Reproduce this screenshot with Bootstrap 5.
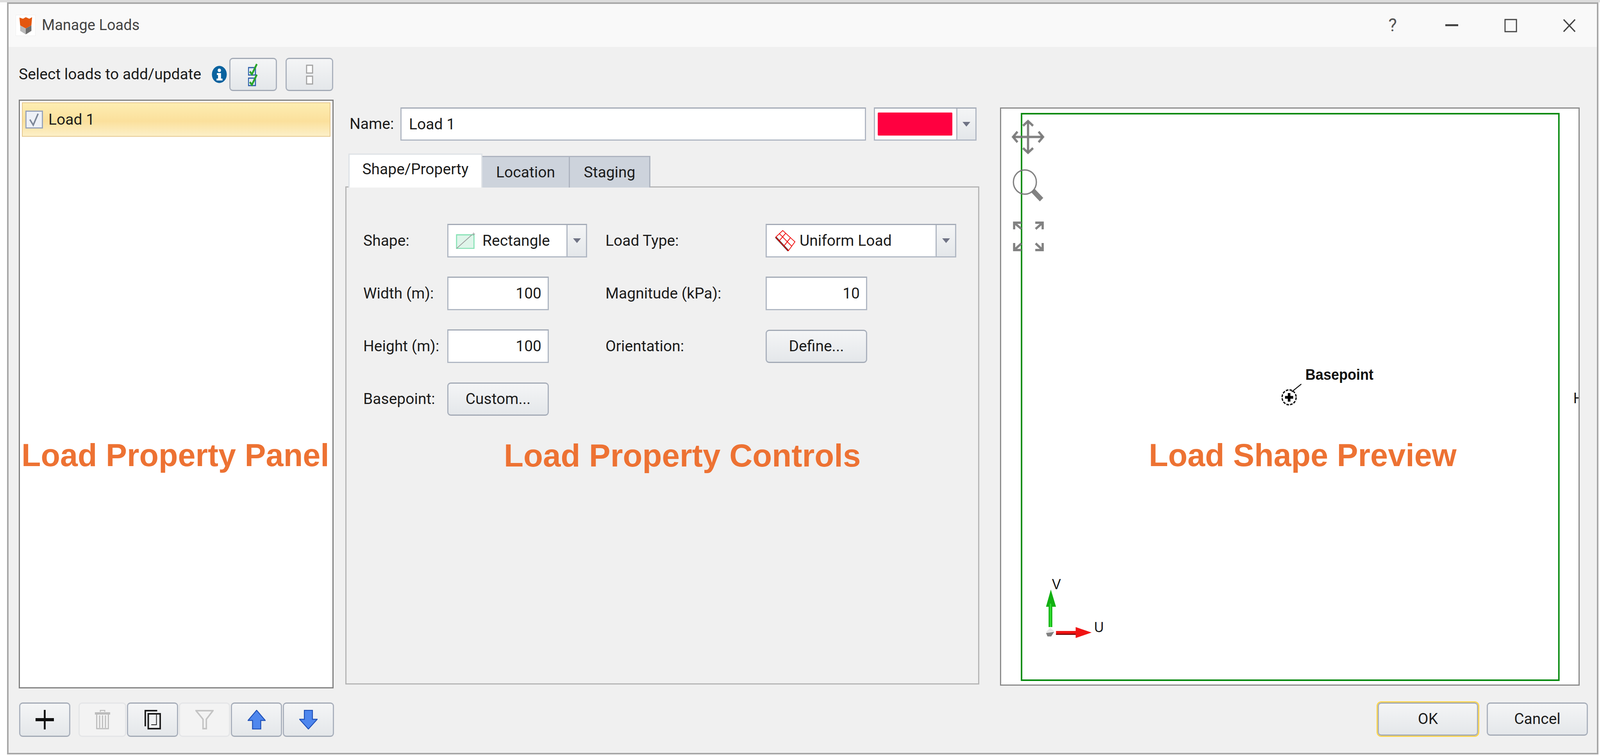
<!DOCTYPE html>
<html lang="en">
<head>
  <meta charset="UTF-8">
  <title>Manage Loads</title>
  <link rel="stylesheet" href="https://cdn.jsdelivr.net/npm/bootstrap@5.3.2/dist/css/bootstrap.min.css">
  <style>
    html, body { height: 1935px; overflow: hidden; }
    body { position: relative; background: #fff; color: #1c1c1c; font-family: Roboto, "Liberation Sans", sans-serif; font-size: 39px; line-height: 1.2; }
    .top-band { height: 6px; background: #dcdcdc; }
    .dlg { margin-left: 18px; width: 4074px; height: 1925px; border: 4px solid #a8a8a8; background: #f0f0f0; }
    .titlebar { height: 110px; background: #f9f9f9; padding-left: 18px; padding-right: 54px; color: #444; font-size: 38px; }
    .title-icon { width: 51px; height: 54px; background: #fff; border: 1px solid #eee; margin-right: 16px; }
    .help { font-size: 46px; margin-right: 124px; color: #555; }
    .win-min { margin-right: 118px; }
    .win-max { margin-right: 117px; }

    .main { height: 1642px; padding: 28px 44px 0 26px; }
    .col-left { width: 806px; }
    .col-mid { width: 1623px; margin-left: 30px; padding: 127px 0 10px; }
    .col-right { width: 1484px; margin-left: 53px; padding: 127px 0 7px; }
    .head-row { height: 85px; margin-bottom: 22px; }
    .head-row .lbl { width: 494px; white-space: nowrap; }
    .info { width: 39px; height: 45px; margin-right: 6px; }

    .w-btn { border: 3px solid #aab1bd; border-top-color: #a2a9b5; border-bottom-color: #a2a9b5; border-radius: 9px; color: #1c1c1c; font-size: 39px; line-height: 1; padding: 0;
      background: linear-gradient(#f4f5f6, #e4e7ea); }
    .w-btn:disabled { opacity: 1; border-color: #e4e5e7; background: #f3f3f3; }
    .w-btn.head { width: 122px; height: 85px; margin-right: 22px; }
    .w-btn.head:last-child { margin-right: 0; }

    .load-list { border: 3px solid #7f7f7f; background: #fff; padding: 4px 5px; border-radius: 0; flex: 1 1 auto; }
    .load-item { height: 88px; border: 2px solid #e6c88f; border-radius: 8px; padding: 0 0 0 7px; gap: 14px;
      background: linear-gradient(#fdedb2, #fbe09c 55%, #fcf0c8); color: #1c1c1c; }
    .load-check { width: 45px; height: 46px; }

    .name-row { height: 85px; margin-bottom: 33px; padding-left: 11px; padding-right: 7px; }
    .name-lbl { width: 130px; }
    .w-input { border: 3px solid #b0b7c3; border-top-color: #a2a9b5; border-radius: 0; background: #fff; font-size: 39px; line-height: 1; color: #1c1c1c; }
    .name-input { padding: 0 19px; flex: 1 1 auto; width: auto; }
    .color-combo { width: 263px; height: 85px; margin-left: 20px; padding-left: 7px; }
    .swatch { height: 59px; width: 193px; background: #ff0040; border-radius: 2px; margin-right: 10px; }

    .w-combo { border: 3px solid #b0b7c3; border-top-color: #a2a9b5; background: #fff; }
    .w-combo .arrow { width: 50px; border-left: 3px solid #b0b7c3; background: linear-gradient(#f4f5f6, #e4e7ea); }
    .tri { width: 0; height: 0; border-left: 10px solid transparent; border-right: 10px solid transparent; border-top: 12px solid #6f7385; }

    .tabs { height: 87px; margin: 0 0 -3px 8px; padding: 0; border: 0; position: relative; z-index: 1; }
    .tabs .nav-link { height: 81px; border: 3px solid #adb3bf; border-bottom: 0; border-left-width: 0; border-radius: 0; background: #cdd3dc; color: #1c1c1c; padding: 16px 0 0 0; text-align: center; margin: 0; }
    .tabs .nav-link.active { height: 87px; border-left-width: 3px; background: #fff; padding-top: 14px; width: 343px; color: #1c1c1c; }
    .tabs .t2 { width: 224px; }
    .tabs .t3 { width: 206px; border-right-width: 3px; }
    .pane { flex: 1 1 auto; border: 3px solid #b5b5b5; border-radius: 0; background: #f0f0f0; padding: 93px 0 0 43px; }

    .f-row { height: 86px; margin-bottom: 49px; }
    .f-lbl { width: 215px; }
    .f-cell { width: 358px; }
    .f-lbl2 { width: 410px; margin-left: 47px; }
    .f-combo { height: 86px; width: 358px; padding-left: 19px; }
    .f-combo2 { width: 488px; }
    .f-input { width: 260px; height: 86px; text-align: right; padding: 0 16px; }
    .f-btn { width: 260px; height: 85px; }
    .combo-text { flex: 1 1 auto; margin-left: 18px; }
    .f-combo2 .combo-text { margin-left: 10px; }

    .preview { flex: 1 1 auto; border: 3px solid #8a8a8a; background: #fff; overflow: hidden; }
    .preview svg { display: block; }

    .foot { height: 165px; padding: 36px 23px 0 27px; }
    .tool { width: 131px; height: 88px; margin-right: 2px; }
    .tool.first { margin-right: 21px; }
    .tool.narrow { width: 122px; }
    .w-btn.act { width: 259px; height: 85px; }
    .w-btn.ok { width: 257px; margin-right: 22px; box-shadow: 0 0 0 3px #fbd54e; }

    .caption { position: absolute; color: #ed7233; font-family: "Liberation Sans", Arial, sans-serif; font-weight: 700; font-size: 81px; line-height: 1; white-space: nowrap; }
    .cap-panel { left: 55px; top: 1125px; }
    .cap-controls { left: 1290px; top: 1125px; font-size: 81.8px; }
    .cap-preview { left: 2941px; top: 1125px; }
  </style>
</head>
<body>
<div class="top-band"></div>
<div class="dlg d-flex flex-column">

  <div class="titlebar d-flex align-items-center">
    <div class="title-icon d-flex align-items-center justify-content-center">
      <svg width="36" height="48" viewBox="0 0 40 48" preserveAspectRatio="none">
        <path d="M2 4 L12 7 L20 3 L30 7 L38 3 L36 24 L20 32 L4 24 Z" fill="#e4570f"/>
        <path d="M20 32 L36 24 V38 L20 47 Z" fill="#6d6d6d"/>
        <path d="M4 24 L20 32 V47 L4 38 Z" fill="#b9b9b9"/>
      </svg>
    </div>
    <span class="flex-grow-1">Manage Loads</span>
    <span class="help">?</span>
    <svg class="win-min" width="33" height="6" viewBox="0 0 36 6" preserveAspectRatio="none"><rect width="36" height="5" fill="#444"/></svg>
    <svg class="win-max" width="33" height="35" viewBox="0 0 35 35" preserveAspectRatio="none"><rect x="2" y="2" width="31" height="31" fill="none" stroke="#444" stroke-width="3"/></svg>
    <svg width="33" height="35" viewBox="0 0 36 35" preserveAspectRatio="none"><path d="M2 2 L34 33 M34 2 L2 33" stroke="#444" stroke-width="3.5"/></svg>
  </div>

  <div class="main d-flex">
    <!-- left column: load list -->
    <div class="col-left d-flex flex-column">
      <div class="head-row d-flex align-items-center">
        <span class="lbl">Select loads to add/update</span>
        <svg class="info" viewBox="0 0 41 45" preserveAspectRatio="none">
          <ellipse cx="20.5" cy="22.5" rx="20" ry="22" fill="#0b639f"/>
          <circle cx="20.5" cy="12" r="4.5" fill="#fff"/>
          <path d="M14 19 H25 V33 H29 V38 H13 V33 H17 V24 H14 Z" fill="#fff"/>
        </svg>
        <button class="btn w-btn head d-flex align-items-center justify-content-center">
          <svg width="27" height="60" viewBox="0 0 30 60" preserveAspectRatio="none">
            <rect x="1" y="12" width="20" height="19" fill="#e8eef8" stroke="#2a5da8" stroke-width="3"/>
            <rect x="1" y="39" width="20" height="19" fill="#e8eef8" stroke="#2a5da8" stroke-width="3"/>
            <path d="M5 22 L11 29 L25 3" fill="none" stroke="#2aa52a" stroke-width="5"/>
            <path d="M5 49 L11 56 L25 30" fill="none" stroke="#2aa52a" stroke-width="5"/>
          </svg>
        </button>
        <button class="btn w-btn head d-flex align-items-center justify-content-center">
          <svg width="19" height="52" viewBox="0 0 20 52" preserveAspectRatio="none">
            <rect x="2" y="2" width="16" height="20" fill="#fff" stroke="#a3a3a3" stroke-width="3"/>
            <rect x="2" y="30" width="16" height="20" fill="#fff" stroke="#a3a3a3" stroke-width="3"/>
          </svg>
        </button>
      </div>
      <div class="list-group load-list">
        <div class="list-group-item load-item d-flex align-items-center">
          <svg class="load-check" viewBox="0 0 47 46" preserveAspectRatio="none">
            <rect x="1.5" y="1.5" width="44" height="43" fill="#eef1f7" stroke="#97a3ba" stroke-width="3"/>
            <path d="M12 23 L21 37 L34 8" fill="none" stroke="#7d8798" stroke-width="4"/>
          </svg>
          <span>Load 1</span>
        </div>
      </div>
    </div>

    <!-- middle column: property controls -->
    <div class="col-mid d-flex flex-column">
      <div class="name-row d-flex align-items-center">
        <label class="name-lbl">Name:</label>
        <input class="form-control w-input name-input h-100" type="text" value="Load 1">
        <div class="w-combo color-combo d-flex align-items-center">
          <div class="swatch"></div>
          <div class="arrow align-self-stretch d-flex align-items-center justify-content-center flex-grow-1"><div class="tri"></div></div>
        </div>
      </div>
      <ul class="nav nav-tabs tabs align-items-end">
        <li class="nav-item"><a class="nav-link active" href="#">Shape/Property</a></li>
        <li class="nav-item"><a class="nav-link t2" href="#">Location</a></li>
        <li class="nav-item"><a class="nav-link t3" href="#">Staging</a></li>
      </ul>
      <div class="pane">
        <div class="f-row d-flex align-items-center">
          <span class="f-lbl">Shape:</span>
          <div class="f-cell">
            <div class="w-combo f-combo d-flex align-items-center">
              <svg width="50" height="42" viewBox="0 0 56 42" preserveAspectRatio="none">
                <rect x="2" y="6" width="50" height="35" fill="#dff5ea" stroke="#86e2b5" stroke-width="3"/>
                <path d="M2 41 L46 6" stroke="#9a9a9a" stroke-width="2"/>
                <path d="M51 0 V8 M47 4 H55" stroke="#9a9a9a" stroke-width="1.5"/>
              </svg>
              <span class="combo-text">Rectangle</span>
              <div class="arrow align-self-stretch d-flex align-items-center justify-content-center"><div class="tri"></div></div>
            </div>
          </div>
          <span class="f-lbl2">Load Type:</span>
          <div class="w-combo f-combo f-combo2 d-flex align-items-center">
            <svg width="55" height="54" viewBox="0 0 58 54" preserveAspectRatio="none">
              <path d="M4 18 L38 53" stroke="#111" stroke-width="4"/>
              <path d="M23 1 L56 30 L38 53 L4 18 Z M14 9 L47 41 M31 8 L13 28 M44 19 L26 41" fill="none" stroke="#f01010" stroke-width="2"/>
            </svg>
            <span class="combo-text">Uniform Load</span>
            <div class="arrow align-self-stretch d-flex align-items-center justify-content-center"><div class="tri"></div></div>
          </div>
        </div>
        <div class="f-row d-flex align-items-center">
          <span class="f-lbl">Width (m):</span>
          <div class="f-cell"><input class="form-control w-input f-input" type="text" value="100"></div>
          <span class="f-lbl2">Magnitude (kPa):</span>
          <input class="form-control w-input f-input" type="text" value="10">
        </div>
        <div class="f-row d-flex align-items-center">
          <span class="f-lbl">Height (m):</span>
          <div class="f-cell"><input class="form-control w-input f-input" type="text" value="100"></div>
          <span class="f-lbl2">Orientation:</span>
          <button class="btn w-btn f-btn">Define...</button>
        </div>
        <div class="f-row d-flex align-items-center">
          <span class="f-lbl">Basepoint:</span>
          <button class="btn w-btn f-btn">Custom...</button>
        </div>
      </div>
    </div>

    <!-- right column: shape preview -->
    <div class="col-right d-flex flex-column">
      <div class="preview">
        <svg width="1478" height="1474" viewBox="3 3 1558 1474" preserveAspectRatio="none">
          <rect x="58" y="16" width="1450" height="1450" fill="none" stroke="#088a10" stroke-width="4"/>
          <g stroke="#777" fill="none" stroke-opacity=".92">
            <path d="M75.5 36 V115 M36 75.5 H115" stroke-width="6"/>
            <path d="M62 47 L75.5 35 L89 47 M62 104 L75.5 116 L89 104 M47 62 L35 75.5 L47 89 M104 62 L116 75.5 L104 89" stroke-width="6"/>
            <ellipse cx="67" cy="191" rx="31" ry="31" stroke-width="3.5"/>
            <path d="M89 213 L112 236" stroke-width="13"/>
            <path d="M38 312 V295 H58 M39 296 L58 311 M95 295 H115 V312 M114 296 L96 311 M38 347 V365 H58 M39 364 L58 348 M95 365 H115 V347 M114 364 L96 348" stroke-width="6"/>
          </g>
          <circle cx="780" cy="742" r="19" fill="none" stroke="#111" stroke-width="3.5" stroke-dasharray="7 3"/>
          <path d="M780 731 V753 M769 742 H791" stroke="#000" stroke-width="7"/>
          <path d="M787 728 L813 708" stroke="#111" stroke-width="2.5"/>
          <text x="824" y="697" font-family="Liberation Sans" font-weight="700" font-size="38" fill="#111">Basepoint</text>
          <text x="1547" y="757" font-family="Liberation Sans" font-size="38" fill="#111">H</text>
          <path d="M131 1330 V1278 H124 L137 1234 L151 1278 H141 V1330 Z" fill="#12b012"/>
          <path d="M134 1330 V1270 H138 V1330 Z" fill="#30e030"/>
          <path d="M151 1340 H204 V1330 L247 1344 L204 1358 V1350 H151 Z" fill="#f01414"/>
          <path d="M151 1347 H204 V1350 H151 Z" fill="#7a0808"/>
          <path d="M124 1343 L135 1332 L146 1340 L135 1344 Z" fill="#e6e6e6"/>
          <path d="M124 1345 L135 1344 L146 1342 L138 1354 L128 1354 Z" fill="#808080"/>
          <text x="140" y="1233" font-family="Liberation Sans" font-size="36" fill="#111">V</text>
          <text x="254" y="1343" font-family="Liberation Sans" font-size="36" fill="#111">U</text>
        </svg>
      </div>
    </div>
  </div>

  <div class="foot d-flex">
    <button class="btn w-btn tool first d-flex align-items-center justify-content-center">
      <svg width="47" height="50" viewBox="0 0 50 50" preserveAspectRatio="none"><path d="M25 0 V50" stroke="#111" stroke-width="5"/><path d="M0 25 H50" stroke="#111" stroke-width="8"/></svg>
    </button>
    <button class="btn w-btn tool narrow d-flex align-items-center justify-content-center" disabled>
      <svg width="41" height="50" viewBox="0 0 44 50" fill="none" stroke="#bcbcbc" preserveAspectRatio="none"><path d="M1 9 H43" stroke-width="6"/><path d="M16 5 V1 H28 V5" stroke-width="3"/><path d="M6 12 V48 H38 V12 M14 14 V46 M22 14 V46 M30 14 V46" stroke-width="3"/></svg>
    </button>
    <button class="btn w-btn tool d-flex align-items-center justify-content-center">
      <svg width="42" height="50" viewBox="0 0 44 50" fill="none" stroke="#1c1c1c" stroke-width="4" preserveAspectRatio="none"><path d="M34 2 H2 V42"/><rect x="10" y="10" width="32" height="38" fill="#f0f2f3"/><path d="M32 12 V38 H18" stroke-width="2"/></svg>
    </button>
    <button class="btn w-btn tool d-flex align-items-center justify-content-center" disabled>
      <svg width="47" height="50" viewBox="0 0 50 50" fill="none" stroke="#c4c4c4" stroke-width="4" preserveAspectRatio="none"><path d="M2 2 H48 L30 24 V48 H21 V24 Z"/></svg>
    </button>
    <button class="btn w-btn tool d-flex align-items-center justify-content-center">
      <svg width="46" height="50" viewBox="0 0 48 50" preserveAspectRatio="none"><path d="M24 1 L47 27 H35 V49 H13 V27 H1 Z" fill="#4f87ee" stroke="#1f50b8" stroke-width="2.5"/></svg>
    </button>
    <button class="btn w-btn tool d-flex align-items-center justify-content-center">
      <svg width="47" height="50" viewBox="0 0 50 50" preserveAspectRatio="none"><path d="M25 49 L49 24 H36 V1 H14 V24 H1 Z" fill="#4f87ee" stroke="#1f50b8" stroke-width="2.5"/></svg>
    </button>
    <div class="ms-auto d-flex">
      <button class="btn w-btn act ok">OK</button>
      <button class="btn w-btn act">Cancel</button>
    </div>
  </div>
</div>

<!-- annotation captions lying over the dialog -->
<div class="caption cap-panel">Load Property Panel</div>
<div class="caption cap-controls">Load Property Controls</div>
<div class="caption cap-preview">Load Shape Preview</div>

<script src="https://cdn.jsdelivr.net/npm/bootstrap@5.3.2/dist/js/bootstrap.bundle.min.js"></script>
</body>
</html>
